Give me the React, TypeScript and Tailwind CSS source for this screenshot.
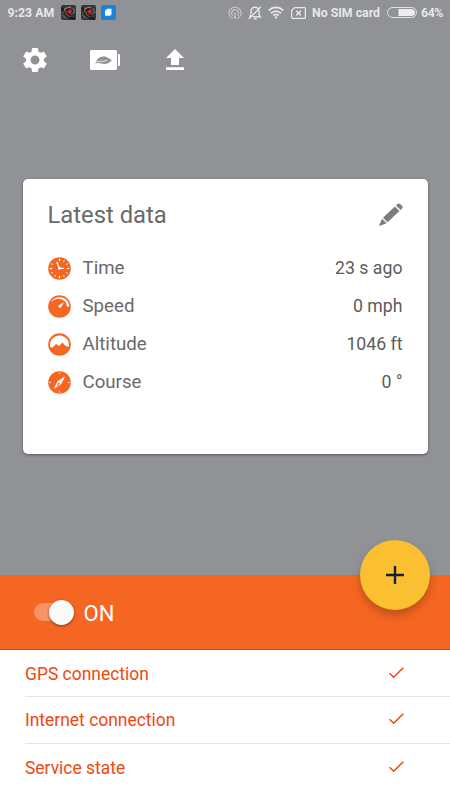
import type { ReactNode } from "react";
import { MdSettings } from "react-icons/md";

const ORANGE = "#f46622";

function TimeIcon() {
  return (
    <svg viewBox="0 0 23 23" className="size-[23px]" fill="none" stroke="#fff">
      <circle cx="11.5" cy="11.5" r="11.3" fill={ORANGE} stroke="none" />
      {[0, 30, 60, 90, 120, 150, 180, 210, 240, 270, 300].map((a) => (
        <path
          key={a}
          d={a % 90 === 0 ? "M11.5 1.7v2.5" : "M11.5 1.9v1.9"}
          strokeWidth={a % 90 === 0 ? 1.2 : 0.9}
          transform={`rotate(${a} 11.5 11.5)`}
        />
      ))}
      <path d="M8.8 4.9l2.6 6.5h4.5" strokeWidth="1.4" />
      <circle cx="11.5" cy="11.4" r="1.3" fill="#fff" stroke="none" />
    </svg>
  );
}

function SpeedIcon() {
  return (
    <svg viewBox="0 0 23 23" className="size-[23px]">
      <circle cx="11.5" cy="11.5" r="11.3" fill={ORANGE} />
      <path d="M2.8 7.2C6.2.3 20.4-.2 21.4 11.6l-2.4.2C18.4 3.2 8.4 1.2 2.8 7.2z" fill="#fff" />
      <path d="M15.9 7.3l-2.7 4.6a1.4 1.4 0 1 1-1.8-1.8z" fill="#fff" />
    </svg>
  );
}

function AltitudeIcon() {
  return (
    <svg viewBox="0 0 23 23" className="size-[23px]">
      <circle cx="11.5" cy="11.5" r="11.3" fill={ORANGE} />
      <path
        d="M2.3 14.3a9.5 9.5 0 1 1 18.4 0l-1.6-1.4-1 .6-3.6-3.9-3.3 3.3-3.2-2-3.8 3.8-.8-.6z"
        fill="#fff"
      />
    </svg>
  );
}

function CourseIcon() {
  return (
    <svg viewBox="0 0 23 23" className="size-[23px]">
      <circle cx="11.5" cy="11.5" r="11.3" fill={ORANGE} />
      <path d="M17.3 5.2l-4.1 7.7-7.5 5 3.8-7.6z" fill="#fff" />
      <path d="M8.4 15.4l2.1-4.1 1.5 1.5z" fill={ORANGE} />
      <g fill="#fff">
        <circle cx="11.5" cy="2.1" r=".7" />
        <circle cx="11.5" cy="20.9" r=".7" />
        <circle cx="2.1" cy="11.5" r=".7" />
        <circle cx="20.9" cy="11.5" r=".7" />
      </g>
    </svg>
  );
}

function AppBadge() {
  return (
    <svg viewBox="0 0 15 15" className="size-[15px]" fill="none">
      <rect width="15" height="15" rx="2" fill="#393638" />
      <path d="M2 8C3 3 6 2 10 2.5" stroke="#8d8177" strokeWidth="1.3" />
      <path d="M1 3l3 5 5 5 5 1" stroke="#171719" strokeWidth="2" />
      <path d="M5 5l3-1 3 2v3l-3 2-3-3" stroke="#202022" strokeWidth="1.5" />
      <path d="M3 5l3 5 3 2M10 10l3-3" stroke="#c26a32" strokeWidth=".8" />
      <path d="M1 10l4 3M12 3l2 5" stroke="#62847c" strokeWidth=".9" />
      <circle cx="9" cy="6.4" r="1.9" fill="#f21b20" />
    </svg>
  );
}

function StatusBar() {
  return (
    <div className="flex h-[25px] items-center pl-[7.5px] pr-[6.5px] text-[12.3px] font-bold text-[#e6e7e8]">
      <span className="w-[53.2px] whitespace-nowrap pt-px">9:23 AM</span>
      <div className="flex gap-[5px]">
        <AppBadge />
        <AppBadge />
        <svg viewBox="0 0 15 15" className="size-[15px]">
          <rect width="15" height="15" rx="2.5" fill="#1b82d8" />
          <path d="M6 3.8h4.5v6H9.5v1H4V5.3z" fill="#fff" />
          <path d="M4 5.8l2-2v2z" fill="#8dc1eb" />
        </svg>
      </div>
      <div className="ml-auto flex items-center">
        <svg viewBox="0 0 14 14" className="mr-[6px] size-[14px]" fill="none" stroke="#c5c6c8" strokeWidth="1.2">
          <path d="M4.7 12.6a6 6 0 1 1 4.6 0" />
          <path d="M4.7 9.6a3.4 3.4 0 1 1 4.6 0" />
          <path d="M7 6.6v2" strokeWidth="1.6" />
          <path d="M7 9.4v3.4" strokeWidth="2" />
        </svg>
        <svg viewBox="0 0 14 14" className="mr-[6px] size-[14px]" fill="none" stroke="#e6e7e8" strokeWidth="1.4">
          <path d="M3 8V5.2C3.2 2.8 4.8 1.3 7 1.3s3.8 1.5 4 3.9v3.6l1.5 2H5M1.6 10.8L3 8.7M.8 13L12.8.8" />
          <path d="M5.8 12.9h2.8" strokeWidth="1.5" />
        </svg>
        <svg viewBox="0 0 16 13" className="mr-[7px] h-[13px] w-[16px]" fill="none" stroke="#e6e7e8" strokeWidth="1.7">
          <path d="M.6 4.7c4.2-4.3 10.6-4.3 14.8 0M3 7.3c2.9-3 7.1-3 10 0M5.3 9.6c1.6-1.6 3.8-1.6 5.4 0" />
          <circle cx="8" cy="11.4" r="1.2" fill="#e6e7e8" stroke="none" />
        </svg>
        <svg viewBox="0 0 15 12" className="mr-[6.5px] h-[12px] w-[15px]" fill="none" stroke="#e6e7e8" strokeWidth="1.3">
          <path d="M3.5.6h9.7q1.2 0 1.2 1.2v8.4q0 1.2-1.2 1.2H1.8Q.6 11.4.6 10.2V3.5z" />
          <path d="M5.3 3.8l4.6 4.6M9.9 3.8L5.3 8.4" strokeWidth="1.5" />
        </svg>
        <span className="w-[69px] whitespace-nowrap pt-px">No SIM card</span>
        <svg viewBox="0 0 30 11" className="ml-[6px] mr-[4px] h-[11px] w-[30px]">
          <rect x=".5" y=".5" width="29" height="10" rx="5" fill="none" stroke="#e0e1e2" />
          <path d="M11.5 2H24q4 0 4 3.5T24 9H11.5z" fill="#eceded" />
        </svg>
        <span className="w-[22.5px] whitespace-nowrap pt-px tracking-[-0.4px]">64%</span>
      </div>
    </div>
  );
}

function Toolbar() {
  return (
    <div className="flex h-[70px] items-center pl-5 text-white">
      <MdSettings className="size-[30px]" />
      <svg viewBox="0 0 30 20" className="ml-10 h-5 w-[30px]">
        <rect width="27" height="20" rx="1.5" fill="#fff" />
        <path d="M28 4h.7q1.3 0 1.3 1.3v9.4q0 1.3-1.3 1.3H28z" fill="#fff" />
        <path
          d="M4.8 13.8c.9-.8 1-1.6 1.6-2.8C8 7.2 11.5 5.8 15 6.6c2.6.6 4.2 2.4 6.9 3.4-2 2.6-4.4 4-7.4 4-3-.1-5.9-1.8-9.7-.2z"
          fill="#919295"
        />
        <path d="M4.6 13.4c4.8-3.6 7.5-.9 12.7-3.2" fill="none" stroke="#fff" strokeWidth=".8" />
      </svg>
      <svg viewBox="0 0 18 21" className="-mt-px ml-[46px] h-[21px] w-[18px]" fill="#fff">
        <path d="M9 0l9 9h-5v7H5V9H0zM0 18.2h18V21H0z" />
      </svg>
    </div>
  );
}

const readings: { label: string; value: string; icon: ReactNode }[] = [
  { label: "Time", value: "23 s ago", icon: <TimeIcon /> },
  { label: "Speed", value: "0 mph", icon: <SpeedIcon /> },
  { label: "Altitude", value: "1046 ft", icon: <AltitudeIcon /> },
  { label: "Course", value: "0 °", icon: <CourseIcon /> },
];

function LatestData() {
  return (
    <section className="mx-[22.5px] mt-[84px] h-[275px] rounded-[5px] bg-white px-[25px] pt-[18px] text-[#6a6a6a] shadow-[0_1px_3px_rgba(0,0,0,0.4)]">
      <div className="flex h-9 items-center justify-between">
        <h2 className="text-[23.8px] leading-9">Latest data</h2>
        <svg viewBox="0 0 24 23" className="-mt-px h-[23px] w-6" fill="#7d7d7d">
          <path d="M4 14.7L15.9 3.4l4.6 4.6L8.6 19.3z" />
          <path d="M17 2.4L18.4 1q1.4-1.2 2.8 0L23 2.8q1.3 1.3 0 2.6l-1.4 1.5z" />
          <path d="M3.1 15.8l4.5 4.4L1 22.7q-1 .2-.7-.8z" />
        </svg>
      </div>
      <ul className="mt-4">
        {readings.map((r) => (
          <li key={r.label} className="flex h-[38px] items-center text-[18.7px]">
            {r.icon}
            <span className="ml-3">{r.label}</span>
            <span className="ml-auto text-[17.7px] text-[#5c5c5c]">{r.value}</span>
          </li>
        ))}
      </ul>
    </section>
  );
}

const checks = ["GPS connection", "Internet connection", "Service state"];

export default function App() {
  return (
    <div className="flex h-[800px] w-[450px] flex-col overflow-hidden bg-white font-['Roboto',sans-serif]">
      <main className="h-[575px] shrink-0 bg-[#919295]">
        <StatusBar />
        <Toolbar />
        <LatestData />
      </main>

      <div className="relative flex h-[75px] shrink-0 items-center border-b border-[#ec3d08] bg-[#f46622] pl-[34px]">
        <div className="flex h-[18px] w-[40px] items-center justify-end rounded-full bg-[#f89365]">
          <div className="size-[25px] shrink-0 rounded-full bg-[#fafafa] shadow-[0_1px_3px_rgba(0,0,0,0.45)]" />
        </div>
        <span className="ml-[9.5px] mt-0.5 text-[22px] text-white">ON</span>
        <button className="absolute -top-[35px] right-5 flex size-[70px] items-center justify-center rounded-full bg-[#fac031] shadow-[0_5px_9px_rgba(0,0,0,0.22)]">
          <svg viewBox="0 0 18 18" className="size-[18px]" stroke="#142337" strokeWidth="2.4">
            <path d="M9 0v18M0 9h18" />
          </svg>
        </button>
      </div>

      <ul className="ml-[25px] divide-y divide-[#e4e4e4] text-[17.45px] text-[#f1470f]">
        {checks.map((c) => (
          <li key={c} className="flex h-[46.8px] items-center justify-between pr-[46px] pt-[1.6px]">
            <span>{c}</span>
            <svg viewBox="0 0 15 12" className="-mt-[2px] h-3 w-[15px]" fill="none" stroke="#f1470f" strokeWidth="1.5">
              <path d="M.6 6.2l4 4L14.3 .8" />
            </svg>
          </li>
        ))}
      </ul>
    </div>
  );
}
